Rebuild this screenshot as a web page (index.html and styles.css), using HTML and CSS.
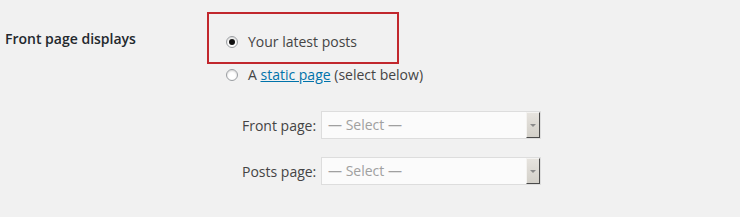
FILE: index.html
```html
<!DOCTYPE html>
<html>
<head>
<meta charset="utf-8">
<link rel="stylesheet" href="styles.css">
</head>
<body>
<div class="row">
  <div class="heading">Front page displays</div>
  <div class="options">
    <div class="highlight">
      <label class="choice">
        <span class="radio checked"></span>
        <span class="choice-text">Your latest posts</span>
      </label>
    </div>
    <label class="choice second">
      <span class="radio"></span>
      <span class="choice-text">A <a href="#" class="link">static page</a> (select below)</span>
    </label>
    <div class="pages">
      <div class="page-row">
        <span class="page-label">Front page:</span>
        <div class="select">
          <span class="select-text">— Select —</span>
          <span class="select-btn"><span class="arrow"></span></span>
        </div>
      </div>
      <div class="page-row">
        <span class="page-label">Posts page:</span>
        <div class="select">
          <span class="select-text">— Select —</span>
          <span class="select-btn"><span class="arrow"></span></span>
        </div>
      </div>
    </div>
  </div>
</div>
</body>
</html>
```
FILE: styles.css
```css
html, body {
  margin: 0;
  padding: 0;
  background: #f1f1f1;
  font-family: "Open Sans", "Liberation Sans", sans-serif;
  font-size: 14px;
  color: #444;
}
.row {
  display: flex;
}
.heading {
  width: 202px;
  padding-left: 5px;
  padding-top: 29px;
  line-height: 19px;
  font-weight: 600;
  color: #23282d;
}
.options {
  padding-top: 12px;
  display: flex;
  flex-direction: column;
}
.highlight {
  width: 192px;
  height: 52px;
  border: 2px solid #c1272d;
  padding: 7px 0 0 17px;
  box-sizing: border-box;
  display: flex;
  align-items: center;
}
.choice {
  display: flex;
  align-items: center;
  line-height: 22px;
}
.second {
  padding-left: 19px;
}
.radio {
  width: 12px;
  height: 12px;
  box-sizing: border-box;
  border-radius: 50%;
  border: 1px solid #9a9da1;
  background: #fff;
  box-shadow: inset 0 1px 2px rgba(0,0,0,0.18);
  margin-right: 10px;
  display: flex;
  align-items: center;
  justify-content: center;
  flex: none;
}
.radio.checked::after {
  content: "";
  width: 6px;
  height: 6px;
  border-radius: 50%;
  background: #111;
}
.choice-text {
  color: #444;
}
.link {
  color: #0073aa;
  text-decoration: underline;
}
.pages {
  padding-left: 35px;
  padding-top: 25px;
  display: flex;
  flex-direction: column;
  gap: 18px;
}
.page-row {
  display: flex;
  align-items: center;
}
.page-label {
  width: 79px;
  flex: none;
}
.select {
  width: 220px;
  height: 28px;
  box-sizing: border-box;
  border: 1px solid #ddd;
  background: #fbfbfb;
  display: flex;
  align-items: stretch;
}
.select-text {
  flex: 1;
  padding-left: 6px;
  color: #a0a0a0;
  line-height: 26px;
}
.select-btn {
  width: 14px;
  box-sizing: border-box;
  background: linear-gradient(#e6e3de, #d3d0c9);
  border-left: 1px solid #f4f3f1;
  border-top: 1px solid #f4f3f1;
  border-right: 1px solid #4a4a4a;
  border-bottom: 1px solid #4a4a4a;
  display: flex;
  align-items: center;
  justify-content: center;
}
.arrow {
  width: 0;
  height: 0;
  border-left: 3px solid transparent;
  border-right: 3px solid transparent;
  border-top: 3px solid #8a8a8a;
}
```
